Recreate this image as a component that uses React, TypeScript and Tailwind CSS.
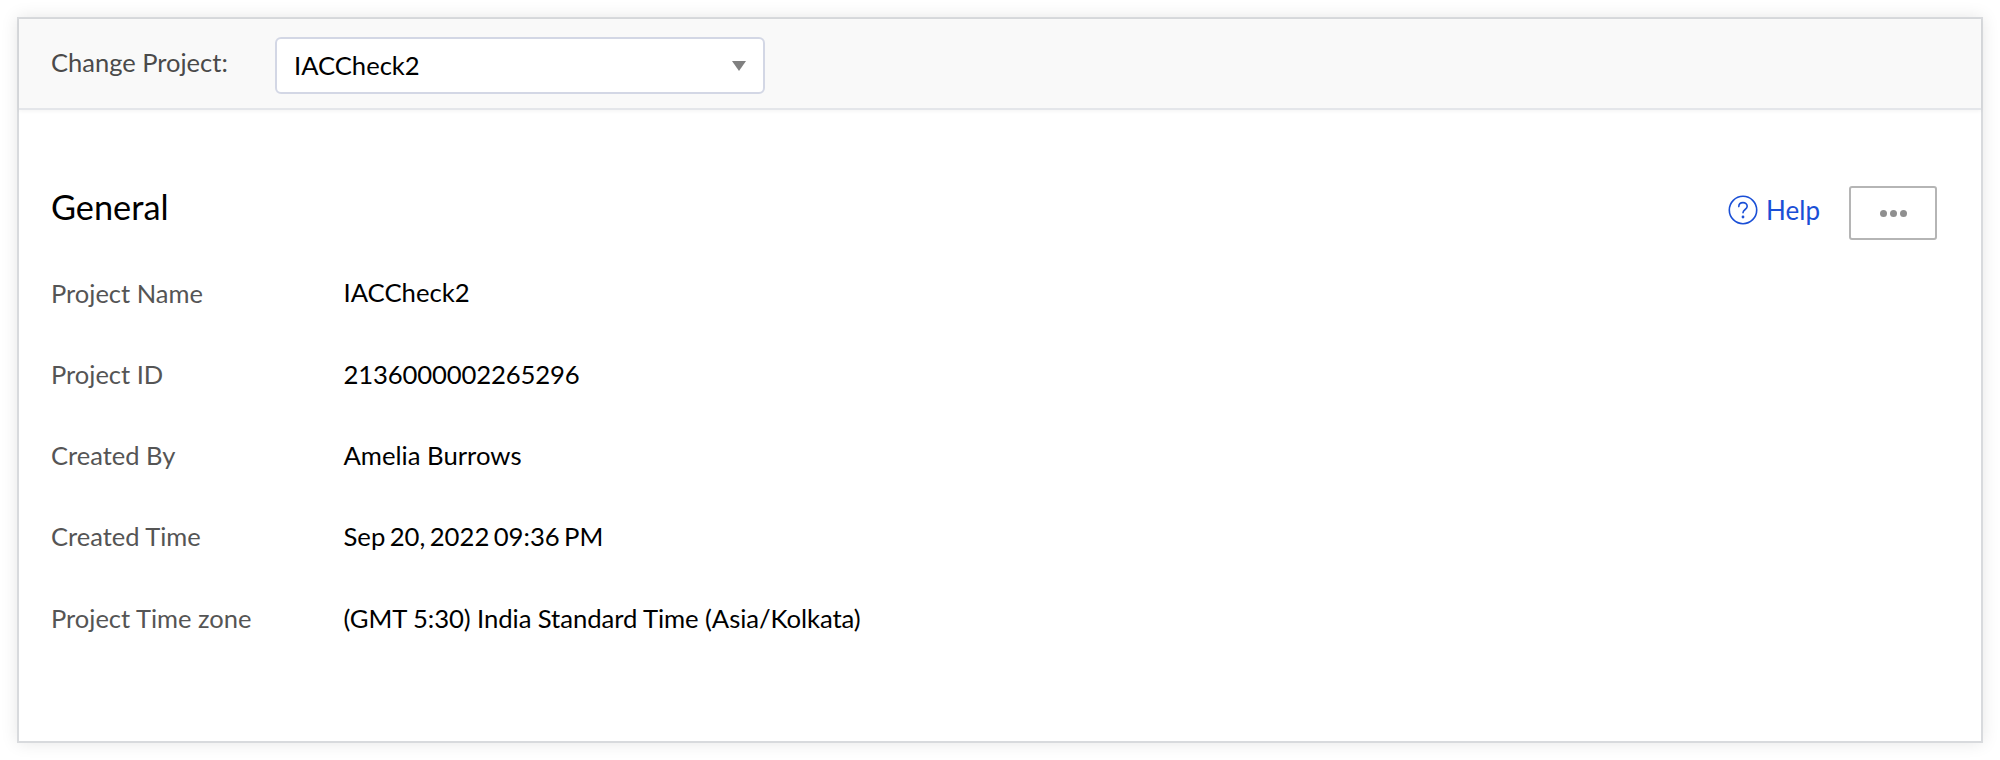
const rows = [
  { label: "Project Name", value: "IACCheck2", extra: "" },
  { label: "Project ID", value: "2136000002265296", extra: "tracking-[-0.15px]" },
  { label: "Created By", value: "Amelia Burrows", extra: "" },
  { label: "Created Time", value: "Sep 20, 2022 09:36 PM", extra: "[word-spacing:-2.2px]" },
  { label: "Project Time zone", value: "(GMT 5:30) India Standard Time (Asia/Kolkata)", extra: "tracking-[-0.08px]" },
];

function App() {
  return (
    <div className="h-[760px] bg-white p-[17px] font-['Lato',sans-serif]">
      <div className="h-[726px] border-2 border-[#d8dadd] bg-white shadow-[0_0_16px_rgba(0,0,0,0.1)]">
        <div className="flex h-[91px] items-center border-b-2 border-[#e4e6ea] bg-[#f9f9f9] pl-[32px] shadow-[0_1px_4px_rgba(0,0,0,0.05)]">
          <span className="w-[224px] pb-[3px] text-[25.5px] text-[#4a4a4a]">Change Project:</span>
          <div className="mt-[3px] flex h-[57px] w-[490px] items-center justify-between rounded-[6px] border-2 border-[#d3d7e5] bg-white pl-[17px] pr-[17px]">
            <span className="text-[25.6px] text-black">IACCheck2</span>
            <svg width="14" height="10" viewBox="0 0 14 10" className="mt-[2px]">
              <path d="M0 0H14L7 10Z" fill="#808080" />
            </svg>
          </div>
        </div>

        <div className="pl-[32px] pr-[44px] pt-[75px]">
          <div className="flex h-[56px] items-center justify-between">
            <h1 className="pb-[13px] text-[34.3px] font-normal text-black">General</h1>
            <div className="flex items-center gap-[29px]">
              <a className="flex items-center gap-[8px] pb-[6px] text-[26px] text-[#1a4fd6]">
                <svg width="30" height="30" viewBox="0 0 30 30" fill="none" stroke="#1a4fd6" strokeWidth="1.6" strokeLinecap="round">
                  <circle cx="15" cy="15" r="13.7" />
                  <path d="M10.8 11.6c0-2.5 1.9-4 4.2-4s4.2 1.5 4.2 3.7c0 3.2-4.2 3.2-4.2 6.5" />
                  <circle cx="15" cy="22" r="0.6" fill="#1a4fd6" />
                </svg>
                Help
              </a>
              <button className="flex h-[54px] w-[88px] items-center justify-center gap-[3px] rounded-[3px] border-2 border-[#b5b5b5] bg-white">
                <span className="h-[7px] w-[7px] rounded-full bg-[#8f8f8f]" />
                <span className="h-[7px] w-[7px] rounded-full bg-[#8f8f8f]" />
                <span className="h-[7px] w-[7px] rounded-full bg-[#8f8f8f]" />
              </button>
            </div>
          </div>

          <div className="mt-[11px] flex flex-col">
            {rows.map((row) => (
              <div key={row.label} className="flex h-[81.3px] items-center">
                <span className="w-[292.5px] text-[25.5px] text-[#555555]">{row.label}</span>
                <span className={"text-[25.7px] text-black " + row.extra}>{row.value}</span>
              </div>
            ))}
          </div>
        </div>
      </div>
    </div>
  );
}

export default App;
